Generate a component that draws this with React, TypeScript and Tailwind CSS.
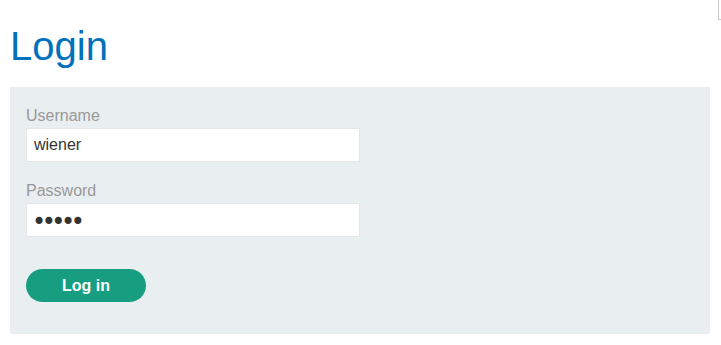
import React from "react";

export default function App() {
  return (
    <div className="relative w-[721px] h-[345px] bg-white overflow-hidden" style={{ fontFamily: '"Liberation Sans", Arial, sans-serif' }}>
      <div className="absolute right-0 top-0 w-[3px] h-[20px] border-l border-b border-[#c8c8c8] rounded-bl-[1px]" />
      <div className="pl-[10px] w-[710px]">
        <h1 className="pt-[23px] text-[40px] leading-[46px] text-[#0071bc] font-normal">Login</h1>
        <form className="mt-[18px] bg-[#e9eef1] pt-[19px] px-[16px] h-[247px] flex flex-col">
          <label className="text-[16px] leading-[20px] text-[#999]">Username</label>
          <input
            className="mt-[2px] w-[334px] h-[34px] bg-white border border-[#e6e6e6] px-[7px] text-[16px] text-[#333] outline-none"
            defaultValue="wiener"
            style={{ fontFamily: '"Liberation Sans", Arial, sans-serif' }}
          />
          <label className="mt-[19px] text-[16px] leading-[20px] text-[#999]">Password</label>
          <input
            className="mt-[2px] w-[334px] h-[34px] bg-white border border-[#e6e6e6] pl-[5px] pr-[7px] pt-[4px] text-[24px] tracking-[-4.5px] text-[#333] outline-none"
            defaultValue="•••••"
            readOnly
            style={{ fontFamily: '"DejaVu Sans", sans-serif' }}
          />
          <button
            type="button"
            className="mt-[32px] w-[120px] h-[33px] rounded-full bg-[#179e80] text-white font-bold text-[16px] leading-none"
          >
            Log in
          </button>
        </form>
      </div>
    </div>
  );
}
